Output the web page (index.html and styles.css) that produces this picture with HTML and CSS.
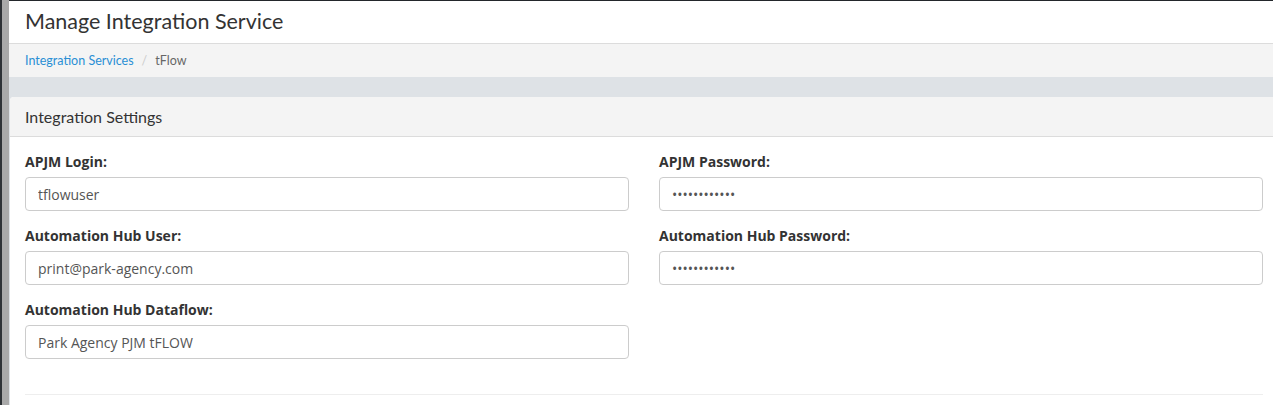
FILE: index.html
```html
<!DOCTYPE html>
<html lang="en">
<head>
  <meta charset="UTF-8" />
  <title>Manage Integration Service</title>
  <link rel="stylesheet" href="styles.css">
</head>
<body>
  <div class="side-strip"></div>

  <div class="main">
    <div class="page-header">
      <h1>Manage Integration Service</h1>
    </div>

    <div class="breadcrumb">
      <a href="#">Integration Services</a>
      <span class="sep">/</span>
      <span class="current">tFlow</span>
    </div>

    <div class="content">
      <div class="panel">
        <div class="panel-heading">Integration Settings</div>
        <div class="panel-body">
          <form class="settings-grid">
            <div class="form-group">
              <label>APJM Login:</label>
              <input type="text" value="tflowuser" />
            </div>
            <div class="form-group">
              <label>APJM Password:</label>
              <input type="password" value="passwordxxxx" />
            </div>
            <div class="form-group">
              <label>Automation Hub User:</label>
              <input type="text" value="print@park-agency.com" />
            </div>
            <div class="form-group">
              <label>Automation Hub Password:</label>
              <input type="password" value="passwordxxxx" />
            </div>
            <div class="form-group">
              <label>Automation Hub Dataflow:</label>
              <input type="text" value="Park Agency PJM tFLOW" />
            </div>
          </form>
          <hr />
        </div>
      </div>
    </div>
  </div>
</body>
</html>
```

FILE: styles.css
```css
html, body {
  height: 100%;
  overflow: hidden;
}

body {
  margin: 0;
  display: flex;
  background: #fff;
  color: #333;
  font-family: 'Open Sans', sans-serif;
}

.side-strip {
  width: 7px;
  flex: none;
  background: #a9a9a9;
  border-left: 2px solid #2e3236;
}

.main {
  flex: 1;
  min-width: 0;
  border-top: 1px solid #23272b;
}

.page-header {
  height: 42px;
  padding: 0 16px;
  display: flex;
  align-items: center;
  border-bottom: 1px solid #dcdcdc;
}

.page-header h1 {
  margin: 0;
  font-family: 'Lato', sans-serif;
  font-weight: 400;
  font-size: 21.5px;
  color: #333;
  position: relative;
  top: -1px;
}

.breadcrumb {
  height: 33px;
  padding: 0 16px;
  display: flex;
  align-items: center;
  gap: 8px;
  background: #f4f4f4;
  font-family: 'Lato', sans-serif;
  font-size: 12.5px;
}

.breadcrumb a {
  color: #2a8fd4;
  text-decoration: none;
}

.breadcrumb .sep {
  color: #ccc;
}

.breadcrumb .current {
  color: #666;
}

.content {
  background: #dee2e6;
  padding-top: 20px;
  padding-left: 1px;
  margin-right: -5px;
}

.panel {
  background: #fff;
  border-radius: 4px 4px 0 0;
  height: 320px;
}

.panel-heading {
  height: 39px;
  padding: 0 15px;
  display: flex;
  align-items: center;
  background: #f4f4f4;
  border-bottom: 1px solid #dcdcdc;
  border-radius: 4px 4px 0 0;
  font-family: 'Lato', sans-serif;
  font-size: 16px;
  color: #333;
}

.panel-body {
  padding: 15px 15px 0;
}

.settings-grid {
  display: grid;
  grid-template-columns: 1fr 1fr;
  column-gap: 30px;
}

.form-group {
  margin-bottom: 15px;
}

label {
  display: block;
  font-weight: 700;
  font-size: 14px;
  line-height: 20px;
  margin-bottom: 5px;
  color: #333;
}

input {
  display: block;
  width: 100%;
  height: 34px;
  box-sizing: border-box;
  padding: 6px 12px;
  font-family: 'Open Sans', sans-serif;
  font-size: 14px;
  color: #555;
  background: #fff;
  border: 1px solid #ccc;
  border-radius: 4px;
}

hr {
  margin: 20px 0 0;
  border: 0;
  border-top: 1px solid #eee;
}
```
